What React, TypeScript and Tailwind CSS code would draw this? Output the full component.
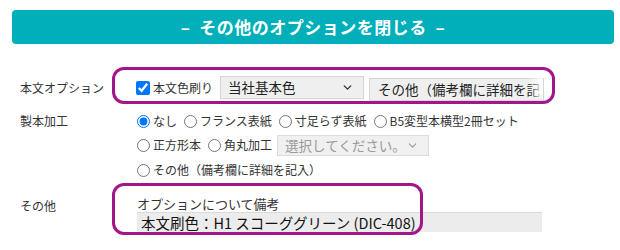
import React from 'react';
import { ChevronDown } from 'lucide-react';

// One radio choice: native input + its label text.
const Radio: React.FC<{ label: string; checked?: boolean }> = ({ label, checked }) => (
  <label className="flex items-center mr-[7px] whitespace-nowrap">
    <input type="radio" name="binding" defaultChecked={checked} className="m-0 w-[13px] h-[13px] accent-[#0075ff]" />
    <span className="ml-[3px] text-[12px] leading-[18px]">{label}</span>
  </label>
);

const App: React.FC = () => {
  return (
    <div className="relative w-[620px] h-[250px] overflow-hidden bg-white text-[#333] font-['Noto_Sans_CJK_JP',sans-serif]">
      <div className="pl-3 pr-[6px] pt-[10px]">
        <button
          type="button"
          className="w-full h-[34px] rounded-[4px] bg-[#00afb9] text-white font-bold text-[17px] tracking-[0.5px] whitespace-pre"
        >
          {'–  その他のオプションを閉じる  –'}
        </button>
      </div>

      <div className="pl-5 mt-[32px] grid grid-cols-[117px_1fr]">
        {/* 本文オプション */}
        <div className="h-[23px] flex items-center text-[12px]">本文オプション</div>
        <div className="h-[23px] flex items-center">
          <label className="flex items-center">
            <input type="checkbox" defaultChecked className="m-0 -ml-px w-[14px] h-[14px] accent-[#0075ff]" />
            <span className="ml-[3px] text-[12px]">本文色刷り</span>
          </label>
          <div className="ml-[7px] w-[144px] h-[23px] flex items-center justify-between pl-[7px] pr-[9px] bg-[#efefef] border border-[#d6d6d6] text-[13.5px] text-[#222]">
            <span>当社基本色</span>
            <ChevronDown className="w-[13px] h-[13px] text-[#333]" strokeWidth={2.5} />
          </div>
          <div className="relative ml-[5px] w-[175px] h-[23px]">
            <input
              type="text"
              readOnly
              value="その他（備考欄に詳細を記入）"
              className="w-full h-full pl-2 bg-[#efefef] border border-[#d6d6d6] text-[13.5px] text-[#222] outline-none"
            />
            <div className="absolute right-px top-px bottom-px w-[14px] bg-gradient-to-r from-transparent to-white" />
          </div>
        </div>

        {/* 製本加工 */}
        <div className="mt-[13px] h-[18px] flex items-center text-[12px]">製本加工</div>
        <div className="mt-[13px] flex flex-col">
          <div className="h-[18px] flex items-center">
            <Radio label="なし" checked />
            <Radio label="フランス表紙" />
            <Radio label="寸足らず表紙" />
            <Radio label="B5変型本横型2冊セット" />
          </div>
          <div className="mt-1 h-[22px] flex items-center">
            <Radio label="正方形本" />
            <Radio label="角丸加工" />
            <div className="-ml-[2px] w-[152px] h-[21px] flex items-center justify-between pl-[7px] pr-[9px] bg-[#f0f0f0] border border-[#dcdcdc] text-[13.5px] text-[#9a9a9a]">
              <span>選択してください。</span>
              <ChevronDown className="w-[13px] h-[13px] text-[#999]" strokeWidth={2} />
            </div>
          </div>
          <div className="mt-[5px] h-[18px] flex items-center">
            <Radio label="その他（備考欄に詳細を記入）" />
          </div>
        </div>

        {/* その他 */}
        <div className="mt-[18px] h-[18px] flex items-center text-[12px]">その他</div>
        <div className="mt-[16px] flex flex-col">
          <div className="h-[17px] flex items-center text-[13px] text-[#333]">オプションについて備考</div>
          <div className="w-[405px] h-[20px] flex items-center pl-1 bg-[#ececec] border-t border-[#dadada] text-[14.5px] text-[#111] whitespace-nowrap">
            本文刷色：H1 スコーググリーン (DIC-408)
          </div>
        </div>
      </div>

      {/* Magenta annotation rings drawn over the form */}
      <div className="absolute left-[112px] top-[67px] w-[443px] h-[37px] rounded-[12px] border-[3px] border-[#a3168a] pointer-events-none" />
      <div className="absolute left-[112px] top-[183px] w-[311px] h-[52px] rounded-[12px] border-[3px] border-[#a3168a] pointer-events-none" />
    </div>
  );
};

export default App;
